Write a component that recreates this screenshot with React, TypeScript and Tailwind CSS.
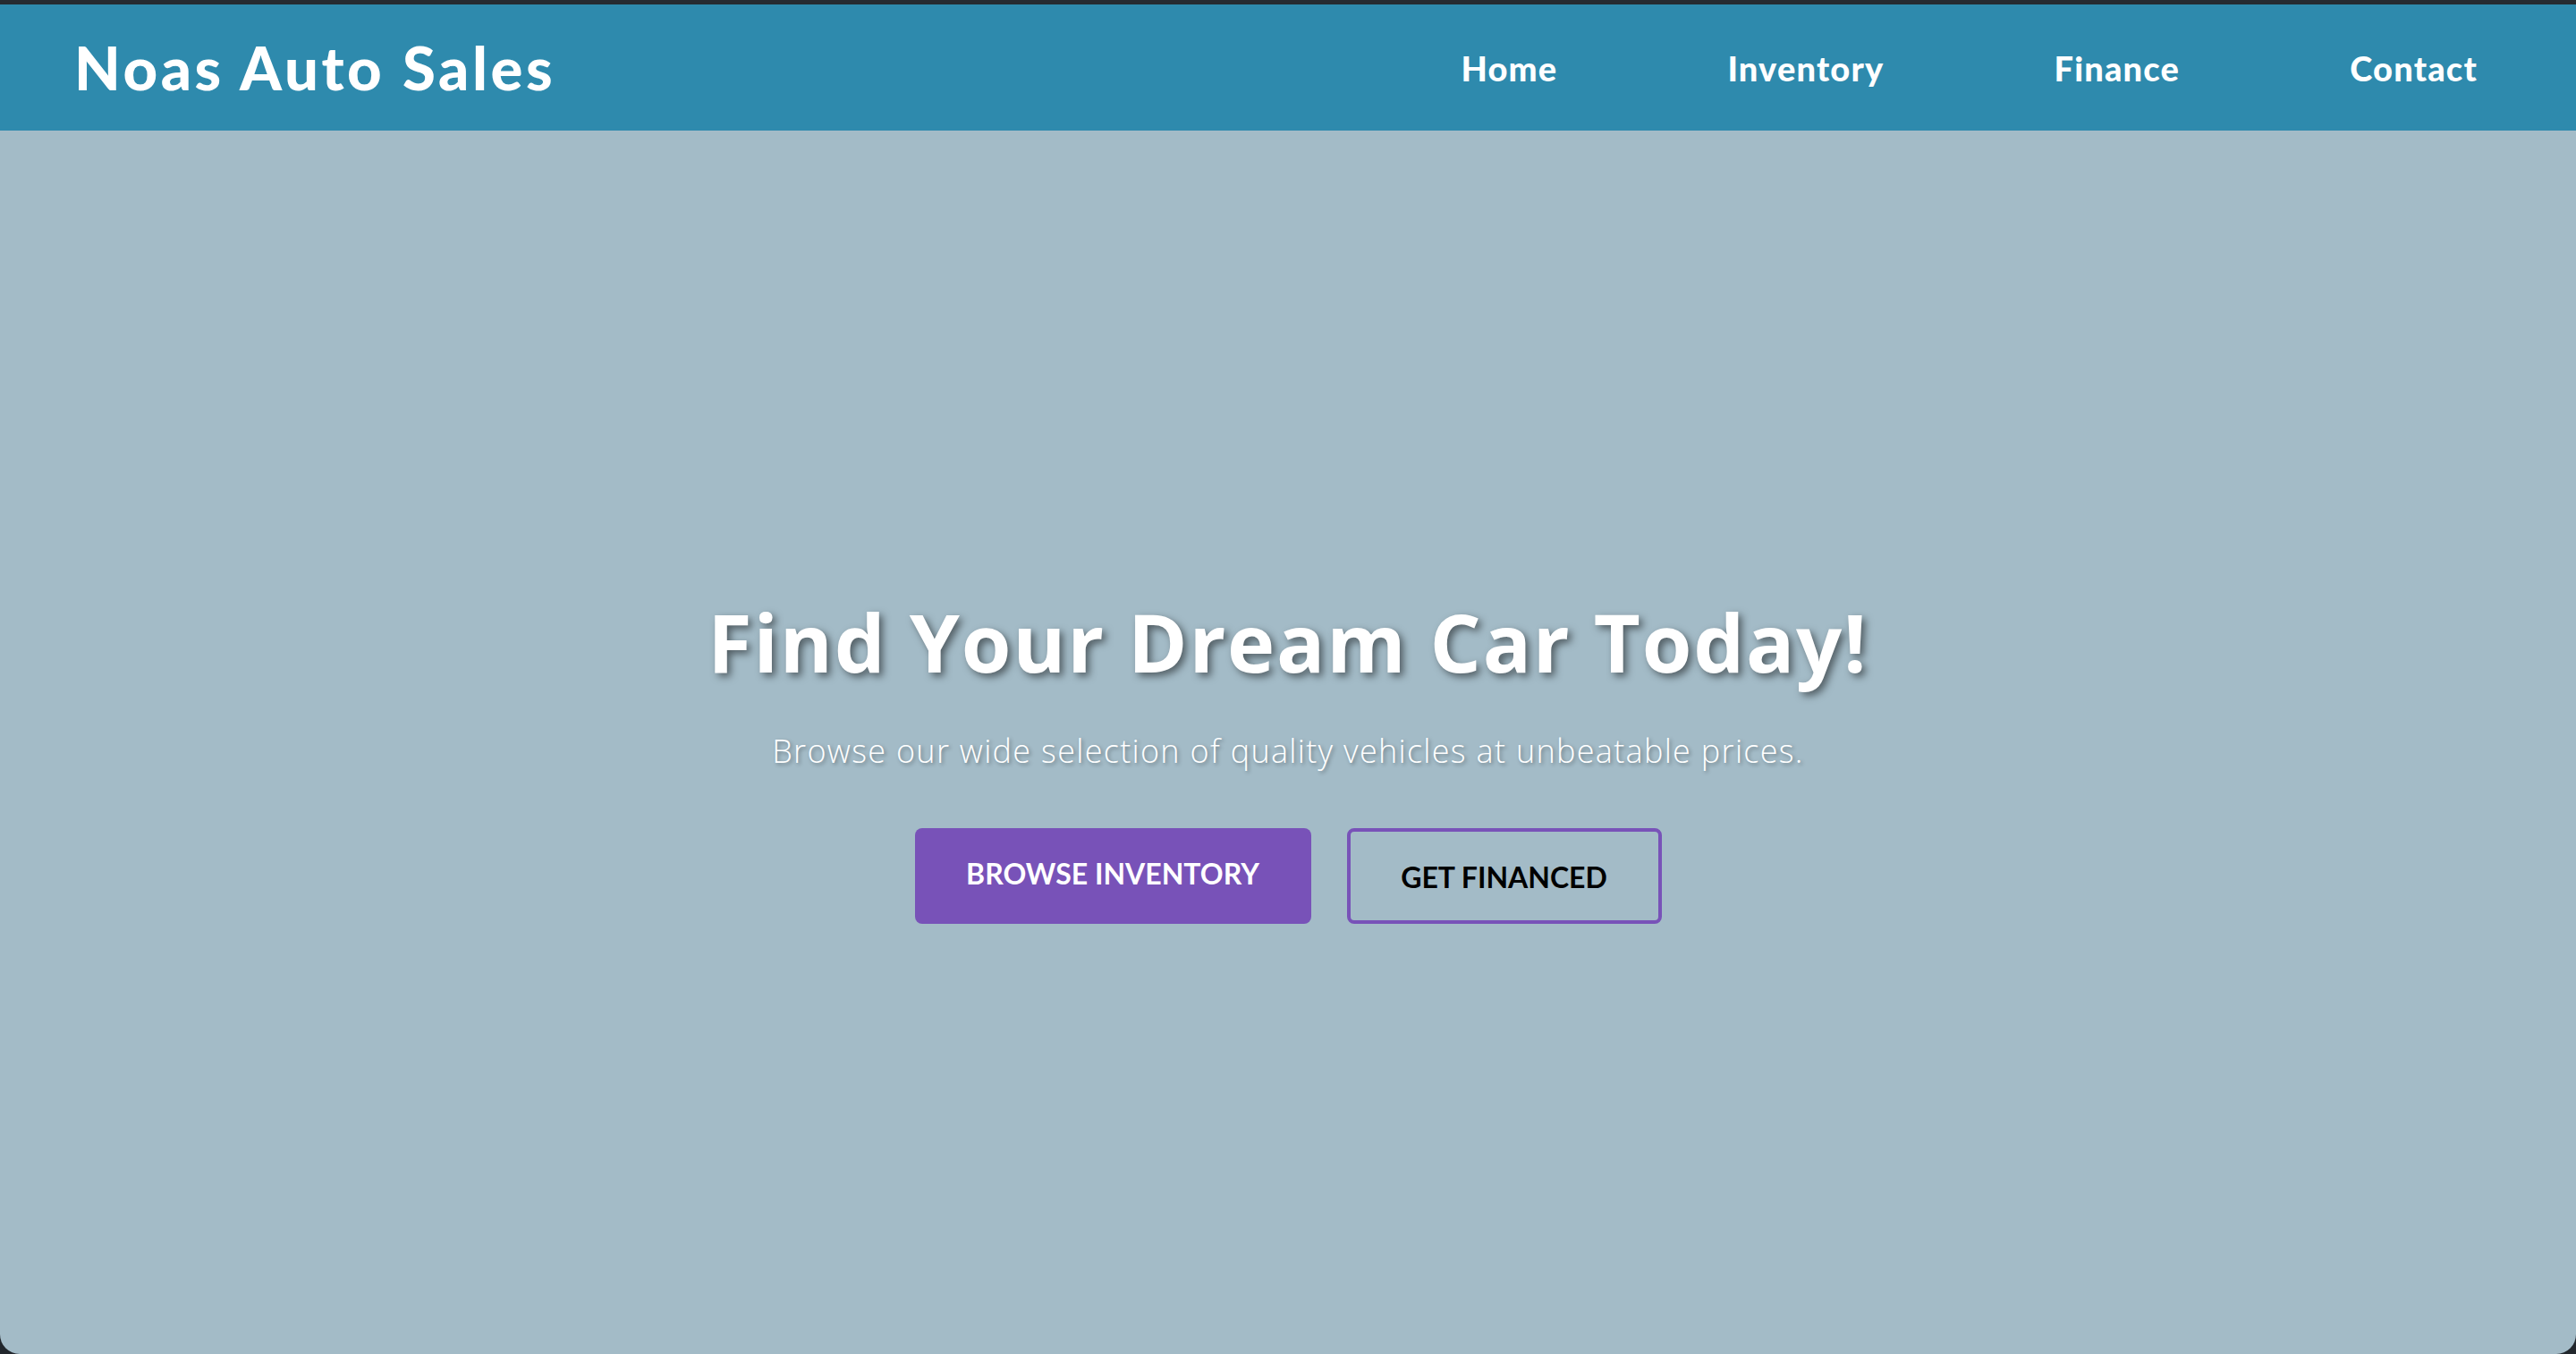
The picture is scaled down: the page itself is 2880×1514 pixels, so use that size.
import React from "react";

export default function App() {
  return (
    <div className="w-full h-[1514px] bg-[#22272d] flex flex-col overflow-hidden">
      <div className="h-[5px] bg-[#262b31] shrink-0" />
      <div className="flex-1 flex flex-col rounded-b-[22px] overflow-hidden">
        <header className="h-[141px] shrink-0 bg-[#2e8aad] flex items-center justify-between pl-[83px] pr-[110px] font-['Lato',sans-serif]">
          <div className="text-white font-black text-[67px] leading-none tracking-[3.6px]">Noas Auto Sales</div>
          <nav className="flex items-center gap-[190px] text-white font-black text-[38px] leading-none tracking-[1.2px]">
            <a>Home</a>
            <a>Inventory</a>
            <a>Finance</a>
            <a>Contact</a>
          </nav>
        </header>
        <main className="flex-1 bg-[#a3bbc7] flex flex-col items-center justify-center pt-[36px]">
          <h1 className="text-white font-bold text-[90px] leading-[1.2] tracking-[1.8px] font-['Open_Sans',sans-serif] [text-shadow:4px_4px_8px_rgba(0,0,0,0.5)]">
            Find Your Dream Car Today!
          </h1>
          <p className="mt-[42px] text-white font-light text-[36px] leading-[1.5] tracking-[1.3px] font-['Open_Sans',sans-serif] [text-shadow:2px_2px_4px_rgba(0,0,0,0.35)]">
            Browse our wide selection of quality vehicles at unbeatable prices.
          </p>
          <div className="mt-[59px] flex items-stretch gap-[40px] font-['Lato',sans-serif]">
            <button className="w-[443px] h-[107px] rounded-[8px] bg-[#7852b8] text-white font-bold text-[32px] pb-[6px]">
              BROWSE INVENTORY
            </button>
            <button className="w-[352px] h-[107px] rounded-[8px] border-[4px] border-[#7852b8] text-black font-bold text-[32px] pt-[2px]">
              GET FINANCED
            </button>
          </div>
        </main>
      </div>
    </div>
  );
}
